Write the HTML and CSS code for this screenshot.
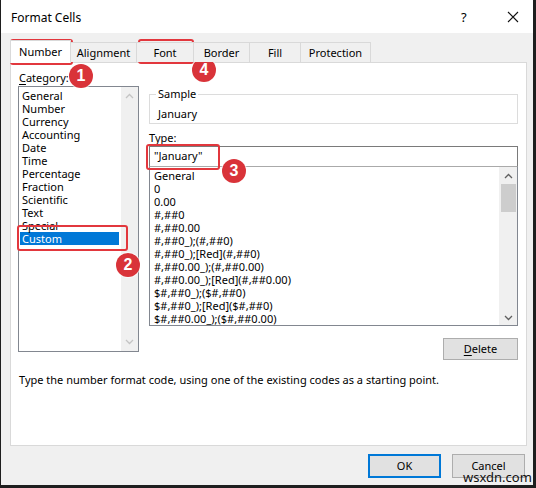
FILE: index.html
```html
<!DOCTYPE html>
<html>
<head>
<meta charset="utf-8">
<link rel="stylesheet" href="styles.css">
</head>
<body>
<div class="window">
  <div class="titlebar">
    <span class="title">Format Cells</span>
    <span class="help">?</span>
    <svg class="close" width="12" height="12" viewBox="0 0 12 12"><path d="M1 1L11 11M11 1L1 11" stroke="#111" stroke-width="1.1" fill="none"/></svg>
  </div>
  <div class="content">
    <div class="tabs">
      <div class="tab tab-number active">Number</div>
      <div class="tab tab-align">Alignment</div>
      <div class="tab tab-font">Font</div>
      <div class="tab tab-border">Border</div>
      <div class="tab tab-fill">Fill</div>
      <div class="tab tab-prot">Protection</div>
    </div>
    <div class="panel">
      <div class="columns">
        <div class="left">
          <div class="label"><u>C</u>ategory:</div>
          <div class="listbox catlist">
            <ul class="items">
              <li>General</li>
              <li>Number</li>
              <li>Currency</li>
              <li>Accounting</li>
              <li>Date</li>
              <li>Time</li>
              <li>Percentage</li>
              <li>Fraction</li>
              <li>Scientific</li>
              <li>Text</li>
              <li>Special</li>
              <li class="selected">Custom</li>
            </ul>
            <div class="scrollbar disabled">
              <svg width="9" height="6" viewBox="0 0 9 6"><path d="M1 5L4.5 1.5L8 5" stroke="#c4c4c4" stroke-width="1.3" fill="none"/></svg>
              <svg width="9" height="6" viewBox="0 0 9 6"><path d="M1 1L4.5 4.5L8 1" stroke="#c4c4c4" stroke-width="1.3" fill="none"/></svg>
            </div>
          </div>
        </div>
        <div class="right">
          <fieldset class="sample">
            <legend>Sample</legend>
            <div class="sample-val">January</div>
          </fieldset>
          <div class="label type-label">Type:</div>
          <div class="typebox">"January"</div>
          <div class="listbox fmtlist">
            <ul class="items">
              <li>General</li>
              <li>0</li>
              <li>0.00</li>
              <li>#,##0</li>
              <li>#,##0.00</li>
              <li>#,##0_);(#,##0)</li>
              <li>#,##0_);[Red](#,##0)</li>
              <li>#,##0.00_);(#,##0.00)</li>
              <li>#,##0.00_);[Red](#,##0.00)</li>
              <li>$#,##0_);($#,##0)</li>
              <li>$#,##0_);[Red]($#,##0)</li>
              <li>$#,##0.00_);($#,##0.00)</li>
            </ul>
            <div class="scrollbar">
              <svg width="9" height="6" viewBox="0 0 9 6"><path d="M1 5L4.5 1.5L8 5" stroke="#606060" stroke-width="1.3" fill="none"/></svg>
              <div class="thumb"></div>
              <div class="grow"></div>
              <svg width="9" height="6" viewBox="0 0 9 6"><path d="M1 1L4.5 4.5L8 1" stroke="#606060" stroke-width="1.3" fill="none"/></svg>
            </div>
          </div>
          <div class="btnrow">
            <div class="btn"><u>D</u>elete</div>
          </div>
        </div>
      </div>
      <div class="hint">Type the number format code, using one of the existing codes as a starting point.</div>
    </div>
    <div class="footer">
      <div class="btn ok">OK</div>
      <div class="btn">Cancel</div>
    </div>
  </div>

  <div class="mark box-number"></div>
  <div class="mark box-font"></div>
  <div class="mark box-type"></div>
  <div class="mark box-custom"></div>
  <div class="badge b1">1</div>
  <div class="badge b2">2</div>
  <div class="badge b3">3</div>
  <div class="badge b4">4</div>
  <div class="watermark">wsxdn.com</div>
</div>
</body>
</html>
```
FILE: styles.css
```css
* { box-sizing: border-box; }
html, body { margin: 0; padding: 0; }
body {
  width: 536px;
  height: 488px;
  font-family: "Noto Sans", "DejaVu Sans", sans-serif;
  font-size: 11px;
  color: #000;
  background: #fff;
}
.window {
  position: relative;
  width: 536px;
  height: 488px;
  background: #f0f0f0;
  border-left: 1px solid #1e1e1e;
  border-right: 3px solid #1e1e1e;
  border-bottom: 3px solid #1e1e1e;
  display: flex;
  flex-direction: column;
}
.titlebar {
  height: 33px;
  flex: none;
  background: #fff;
  display: flex;
  align-items: center;
  padding-left: 10px;
  padding-top: 1px;
}
.title { font-size: 12px; flex: 1; }
.help { font-size: 13px; width: 46px; }
.close { margin-right: 14px; }
.content {
  flex: 1;
  padding: 7px 6px 0 9px;
  display: flex;
  flex-direction: column;
}
.tabs {
  display: flex;
  height: 22px;
  align-items: flex-end;
  position: relative;
  z-index: 1;
}
.tab {
  height: 20px;
  line-height: 19px;
  text-align: center;
  border: 1px solid #d9d9d9;
  border-bottom: none;
  border-left: none;
  background: #f0f0f0;
}
.tab.active {
  height: 23px;
  margin-bottom: -1px;
  background: #fff;
  border-left: 1px solid #d9d9d9;
  line-height: 21px;
  padding-bottom: 1px;
}
.tab-number { width: 61px; }
.tab-align { width: 66px; }
.tab-font { width: 57px; }
.tab-border { width: 56px; }
.tab-fill { width: 51px; }
.tab-prot { width: 70px; }
.panel {
  background: #fff;
  border: 1px solid #d9d9d9;
  height: 384px;
  padding: 0 8px 0 7px;
  display: flex;
  flex-direction: column;
}
.columns { display: flex; gap: 10px; }
.left { width: 121px; flex: none; }
.label { height: 22px; line-height: 14px; padding-top: 8px; padding-left: 1px; }
.label u { text-decoration-thickness: 1px; text-underline-offset: 2px; }
.listbox {
  border: 1px solid #828790;
  background: #fff;
  display: flex;
  overflow: hidden;
}
.catlist { height: 266px; margin-top: 1px; }
.items {
  list-style: none;
  margin: 0;
  padding: 2px 0 0 2px;
  flex: 1;
  line-height: 13px;
}
.items li { padding-left: 2px; white-space: nowrap; }
.catlist .items { padding-top: 2px; padding-left: 1px; }
.items li.selected { background: #0078d7; color: #fff; margin-right: 2px; }
.scrollbar {
  width: 17px;
  flex: none;
  background: #f0f0f0;
  display: flex;
  flex-direction: column;
  align-items: center;
  padding: 6px 0 6px;
}
.scrollbar.disabled { justify-content: space-between; }
.thumb { width: 15px; height: 28px; background: #cdcdcd; margin-top: 5px; }
.grow { flex: 1; }
.right { flex: 1; display: flex; flex-direction: column; }
.sample {
  margin: 24px 0 0 0;
  padding: 0 0 0 8px;
  border: 1px solid #dcdcdc;
  height: 37px;
  min-width: 0;
}
.sample legend { padding: 0 2px; margin-left: -2px; line-height: 14px; }
.sample-val { padding-top: 6px; line-height: 14px; }
.type-label { height: 22px; padding-top: 7px; padding-left: 0; }
.typebox {
  height: 21px;
  border: 1px solid #7a7a7a;
  border-bottom: 1px solid #aaa;
  line-height: 18px;
  padding-left: 4px;
}
.fmtlist { height: 159px; border-top: none; }
.fmtlist .items { padding-top: 2px; }
.fmtlist .scrollbar { padding-top: 6px; padding-bottom: 4px; width: 18px; }
.btnrow { display: flex; justify-content: flex-end; padding-top: 12px; }
.btn {
  width: 75px;
  height: 22px;
  line-height: 19px;
  text-align: center;
  background: #e1e1e1;
  border: 1px solid #adadad;
}
.btn u { text-underline-offset: 2px; }
.hint { padding-top: 13px; padding-left: 1px; line-height: 14px; }
.footer {
  display: flex;
  justify-content: flex-end;
  gap: 11px;
  padding-top: 8px;
  padding-right: 2px;
}
.footer .btn { width: 73px; height: 24px; line-height: 21px; }
.footer .btn.ok { border: 2px solid #0078d7; line-height: 20px; }

.mark {
  position: absolute;
  border: 2.5px solid #e2373d;
  border-radius: 3px;
}
.box-number { left: 9px; top: 39px; width: 63px; height: 26px; }
.box-font { left: 137px; top: 39px; width: 56px; height: 25px; }
.box-type { left: 145px; top: 144px; width: 74px; height: 26px; }
.box-custom { left: 16px; top: 225px; width: 111px; height: 26px; }
.badge {
  position: absolute;
  width: 24px;
  height: 24px;
  border-radius: 50%;
  background: #d93339;
  color: #fff;
  font-family: "Liberation Sans", Arial, sans-serif;
  font-weight: bold;
  font-size: 16px;
  line-height: 24px;
  text-align: center;
  box-shadow: 0 0 0 1px rgba(255,255,255,0.6);
}
.b1 { left: 68px; top: 64px; }
.b2 { left: 115px; top: 253px; }
.b3 { left: 221px; top: 159px; }
.b4 { left: 191px; top: 58px; }
.watermark {
  position: absolute;
  left: 462px;
  top: 470px;
  font-family: "Noto Sans", sans-serif;
  font-size: 13px;
  line-height: 14px;
  color: #111;
}
```
